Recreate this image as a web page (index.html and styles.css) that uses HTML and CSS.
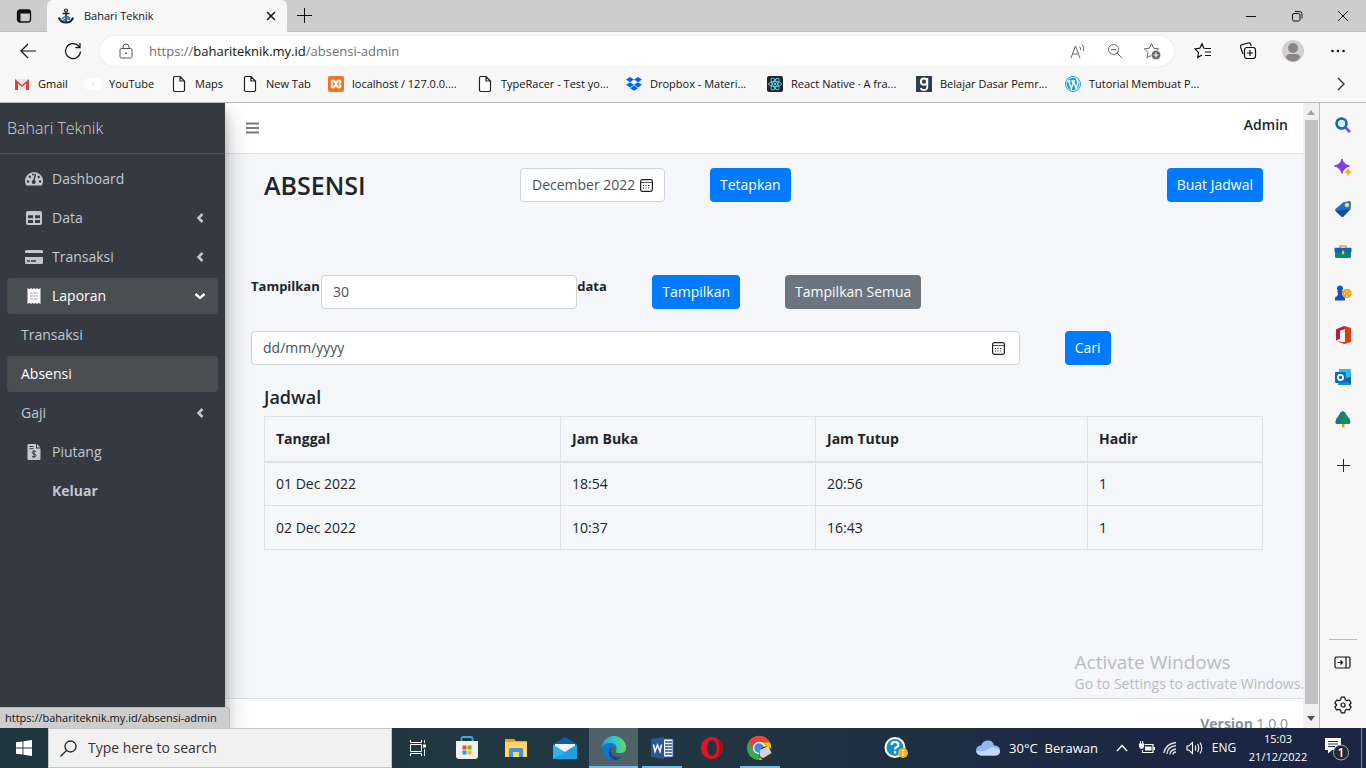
FILE: index.html
```html
<!DOCTYPE html>
<html lang="id">
<head>
<meta charset="utf-8">
<title>Bahari Teknik</title>
<link rel="stylesheet" href="styles.css">
</head>
<body>
<svg class="defs" width="0" height="0" aria-hidden="true">
  <symbol id="i-page" viewBox="0 0 16 16"><path d="M2.500 2A1.500 1.500 0 0 1 4 .5h5L13.500 5v9a1.500 1.500 0 0 1-1.500 1.500H4A1.500 1.500 0 0 1 2.500 14zM9 .5V5h4.500" fill="#fff" stroke="#222" stroke-width="1.200"/></symbol>
  <symbol id="i-left" viewBox="0 0 10 10"><path d="M7.500 1 3.500 5l4 4" fill="none" stroke="currentColor" stroke-width="2.500"/></symbol>
  <symbol id="i-cal" viewBox="0 0 13 13"><rect x=".6" y=".6" width="11.800" height="11.800" rx="1.800" fill="none" stroke="#222" stroke-width="1.200"/><path d="M1 3.500h11" stroke="#555" stroke-width="1"/><path d="M5.500 6.500h1M8 6.500h1.500M3 9h1M5.500 9h1M3 6.500h1M8 9h.8" stroke="#222" stroke-width="1.200"/></symbol>
</svg>

<header class="tabs">
  <button class="tab-actions" aria-label="Tab actions"><svg width="16" height="16" viewBox="0 0 16 16"><rect x="1.500" y="2" width="13" height="12" rx="2.500" fill="#cdcdcd" stroke="#111" stroke-width="1.300"/><path d="M1.500 5.500V4.500q0-2.500 2.500-2.500h8q2.500 0 2.500 2.500v1z" fill="#111"/><path d="M1.500 5h3v9q-3 0-3-2.500z" fill="#111"/></svg></button>
  <div class="tab">
    <svg width="16" height="16" viewBox="0 0 16 16"><circle cx="8" cy="2.500" r="1.500" fill="none" stroke="#222" stroke-width="1.200"/><path d="M8 4v10M4.500 5.500h7" stroke="#222" stroke-width="1.600"/><path d="M1 9.500C2 13 5 14.500 8 14.500s6-1.500 7-5" fill="none" stroke="#1b2b3c" stroke-width="2.200"/><path d="M4 11q4-5 8-.5M5 13q3-4 7-1" fill="none" stroke="#2f75b5" stroke-width="1.500"/></svg>
    <span>Bahari Teknik</span>
    <button class="tab-close" aria-label="Close tab"><svg width="10" height="10" viewBox="0 0 10 10"><path d="m1 1 8 8M9 1 1 9" stroke="#111" stroke-width="1.500"/></svg></button>
  </div>
  <button class="new-tab" aria-label="New tab"><svg width="15" height="15" viewBox="0 0 15 15"><path d="M7.500 0v15M0 7.500h15" stroke="#111"/></svg></button>
  <div class="win-controls">
    <button aria-label="Minimize"><svg width="12" height="12" viewBox="0 0 12 12"><path d="M1 6.500h10" stroke="#111"/></svg></button>
    <button aria-label="Restore"><svg width="12" height="12" viewBox="0 0 12 12"><rect x="1.500" y="3.500" width="7.500" height="7.500" rx="1.500" fill="none" stroke="#111"/><path d="M4 1.500h4.500q2.500 0 2.500 2.500v4.500" fill="none" stroke="#111"/></svg></button>
    <button aria-label="Close"><svg width="12" height="12" viewBox="0 0 12 12"><path d="m1 1 10 10M11 1 1 11" stroke="#111"/></svg></button>
  </div>
</header>

<div class="toolbar">
  <button aria-label="Back"><svg width="18" height="16" viewBox="0 0 18 16"><path d="M9 1 2 8l7 7M2 8h15" fill="none" stroke="#111" stroke-width="1.200"/></svg></button>
  <button aria-label="Refresh"><svg width="18" height="18" viewBox="0 0 18 18"><path d="M16.500 9.500A7.500 7.500 0 1 1 14 3.500L16 5.500M16 1v4.700h-4.700" fill="none" stroke="#111" stroke-width="1.200"/></svg></button>
  <div class="address">
    <svg class="lock" width="14" height="16" viewBox="0 0 14 16"><rect x="1" y="5.500" width="12" height="9.500" rx="1.500" fill="none" stroke="#555"/><path d="M4 5.500V4a3 3 0 0 1 6 0v1.500" fill="none" stroke="#555"/><circle cx="7" cy="10.300" r="1" fill="#555"/></svg>
    <p class="url">https://<b>bahariteknik.my.id</b>/absensi-admin</p>
    <button aria-label="Read aloud"><svg width="16" height="16" viewBox="0 0 16 16"><path d="M1 15 5.500 3 10 15M2.600 11h5.800M9.500 3.500q1.500 1.500 1 3.500M12 1.500q3 3 1.500 6.500" fill="none" stroke="#666"/></svg></button>
    <button aria-label="Zoom"><svg width="16" height="16" viewBox="0 0 16 16"><circle cx="6.500" cy="6.500" r="5" fill="none" stroke="#666"/><path d="M4 6.500h5M10 10l5 5" stroke="#666"/></svg></button>
    <button aria-label="Add to favorites"><svg width="18" height="18" viewBox="0 0 18 18"><path d="m8.500 1.500 2.200 4.700 5 .7-3.700 3.600.9 5.200-4.400-2.400-4.500 2.400.9-5.200-3.600-3.600 5-.7z" fill="none" stroke="#666"/><circle cx="13" cy="13" r="4.700" fill="#666" stroke="#fff" stroke-width=".6"/><path d="M13 10.500v5M10.500 13h5" stroke="#fff" stroke-width="1.200"/></svg></button>
  </div>
  <button aria-label="Favorites"><svg width="18" height="18" viewBox="0 0 18 18"><path d="M10 6.500 8 1.800 5.800 6.200 1 7l3.500 3.500-.8 5L8 13M10.500 6.500H17M11 10h6M11 13.500h6" fill="none" stroke="#111" stroke-width="1.200"/></svg></button>
  <button aria-label="Collections"><svg width="18" height="18" viewBox="0 0 18 18"><path d="M4 12 1.700 5.500Q1 3.200 3.400 2.600L9 1q2-.6 2.700 1.300l.5 1.700" fill="none" stroke="#111" stroke-width="1.200"/><rect x="5.500" y="5.500" width="11" height="11" rx="2.500" fill="#f7f7f7" stroke="#111" stroke-width="1.200"/><path d="M11 8v6M8 11h6" stroke="#111" stroke-width="1.200"/></svg></button>
  <button class="profile" aria-label="Profile"><svg width="22" height="22" viewBox="0 0 22 22"><circle cx="11" cy="11" r="11" fill="#d2d0ce"/><circle cx="11" cy="8" r="5" fill="#8a8684"/><path d="M3.500 17Q5 14 8 14h6q3 0 4.500 3-3 4.500-7.500 4.500T3.500 17" fill="#8a8684"/></svg></button>
  <button aria-label="Settings and more"><svg width="16" height="4" viewBox="0 0 16 4"><circle cx="2.500" cy="2" r="1.300" fill="#111"/><circle cx="8" cy="2" r="1.300" fill="#111"/><circle cx="13.500" cy="2" r="1.300" fill="#111"/></svg></button>
</div>

<nav class="bookmarks" aria-label="Favorites bar">
  <a href="#" class="bm-a"><svg width="16" height="16" viewBox="0 0 16 16"><path d="M1 3h14v11H1z" fill="#e8e8e8"/><path d="M1 14V3l7 6 7-6v11h-3V7.500L8 11 4 7.500V14z" fill="#d5453a"/></svg><span>Gmail</span></a>
  <a href="#" class="bm-b"><svg width="16" height="16" viewBox="0 0 16 16"><rect x="0" y="2.500" width="16" height="11" rx="2.500" fill="#fff"/><path d="m6.500 5.500 4 2.500-4 2.500z" fill="#eee"/></svg><span>YouTube</span></a>
  <a href="#" class="bm-a"><svg width="16" height="16"><use href="#i-page"/></svg><span>Maps</span></a>
  <a href="#" class="bm-b"><svg width="16" height="16"><use href="#i-page"/></svg><span>New Tab</span></a>
  <a href="#" class="bm-c"><svg width="16" height="16" viewBox="0 0 16 16"><rect width="16" height="16" rx="2" fill="#ee7623"/><path d="M5 3.500q2 0 3 2 1-2 3-2 2.500 0 2.500 2.300T11.500 8q2 .2 2 2.300T11 12.500q-2 0-3-2-1 2-3 2-2.500 0-2.500-2.200T4.500 8q-2-.2-2-2.200T5 3.500z" fill="#fff"/><path d="M5 5.700v1l1.500 1.300L5 9.300v1M11 5.700v1L9.500 8 11 9.300v1" stroke="#ee7623" stroke-width="1.200" fill="none"/></svg><span>localhost / 127.0.0....</span></a>
  <a href="#" class="bm-c"><svg width="16" height="16"><use href="#i-page"/></svg><span>TypeRacer - Test yo...</span></a>
  <a href="#" class="bm-d"><svg width="16" height="16" viewBox="0 0 16 16"><path d="m4 1 4 2.600-4 2.600-4-2.600zm8 0 4 2.600-4 2.600-4-2.600zM4 6.200l4 2.600-4 2.600-4-2.600zm8 0 4 2.600-4 2.600-4-2.600zM4 12.200l4-2.600 4 2.600-4 2.600z" fill="#0061ff"/></svg><span>Dropbox - Materi...</span></a>
  <a href="#" class="bm-c"><svg width="16" height="16" viewBox="0 0 16 16"><rect width="16" height="16" rx="2" fill="#20232a"/><g fill="none" stroke="#61dafb" stroke-width=".9"><ellipse cx="8" cy="8" rx="6.500" ry="2.500"/><ellipse cx="8" cy="8" rx="6.500" ry="2.500" transform="rotate(60 8 8)"/><ellipse cx="8" cy="8" rx="6.500" ry="2.500" transform="rotate(120 8 8)"/></g><circle cx="8" cy="8" r="1.200" fill="#61dafb"/></svg><span>React Native · A fra...</span></a>
  <a href="#" class="bm-c"><svg width="16" height="16" viewBox="0 0 16 16"><path d="M0 0h16v16H0z" fill="#2d3e50"/><circle cx="8" cy="5.700" r="3.100" fill="none" stroke="#fff" stroke-width="2"/><path d="M11.300 2v8.500q0 3.500-3.300 3.500-2.500 0-3.500-1.800" fill="none" stroke="#fff" stroke-width="1.800"/></svg><span>Belajar Dasar Pemr...</span></a>
  <a href="#" class="bm-c"><svg width="16" height="16" viewBox="0 0 16 16"><circle cx="8" cy="8" r="7.500" fill="#fff" stroke="#1ba0d7"/><circle cx="8" cy="8" r="6.300" fill="#1ba0d7"/><path d="M2 5h3.500M6.500 5H10M3.700 5l2.600 7.500L8 7.500 7.200 5M8.500 5 11 12.500 13 6.500Q12 4.500 11.500 3" fill="none" stroke="#fff" stroke-width="1.400"/></svg><span>Tutorial Membuat P...</span></a>
  <button aria-label="More favorites"><svg width="8" height="14" viewBox="0 0 8 14"><path d="m1 1 6 6-6 6" fill="none" stroke="#333" stroke-width="1.400"/></svg></button>
</nav>

<div class="workspace">
  <div class="viewport">
    <aside class="sidebar">
      <a class="brand" href="#">Bahari Teknik</a>
      <nav class="menu">
        <a href="#"><svg class="ico" width="20" height="16" viewBox="0 0 20 16"><path d="M1 10a9 9 0 0 1 18 0q0 2.500-1.200 4.500H2.200Q1 12.500 1 10z" fill="currentColor"/><path d="m9.800 10 1.700-7" stroke="#343a40" stroke-width="1.400"/><g fill="#343a40"><circle cx="9.700" cy="11" r="2"/><circle cx="4" cy="10.500" r="1.200"/><circle cx="5.800" cy="5.800" r="1.200"/><circle cx="16" cy="10.500" r="1.200"/><circle cx="14.700" cy="6" r="1.200"/><circle cx="9" cy="3.500" r="1"/></g></svg><span>Dashboard</span></a>
        <a href="#"><svg class="ico" width="20" height="16" viewBox="0 0 20 16"><rect x="2" y="1" width="16" height="14" rx="1.800" fill="currentColor"/><path d="M4 5.200h5v3H4zm7 0h5v3h-5zM4 10h5v3H4zm7 0h5v3h-5z" fill="#343a40"/></svg><span>Data</span><svg class="arrow" width="10" height="10"><use href="#i-left"/></svg></a>
        <a href="#"><svg class="ico" width="20" height="16" viewBox="0 0 20 16"><path d="M1 4V2.500Q1 1 2.500 1h15Q19 1 19 2.500V4zm0 4h18v5.500q0 1.500-1.500 1.500h-15Q1 15 1 13.500z" fill="currentColor"/><path d="M3 12h3M7 12h5" stroke="#343a40" stroke-width="1.700"/></svg><span>Transaksi</span><svg class="arrow" width="10" height="10"><use href="#i-left"/></svg></a>
        <a href="#" class="active"><svg class="ico" width="20" height="18" viewBox="0 0 20 18"><path d="m3.500 1 2 1.300 1.500-1.300L8.500 2.300 10 1l1.500 1.300L13 1l1.500 1.300 2-1.300v16l-2-1.300L13 17l-1.500-1.300L10 17l-1.500-1.300L7 17l-1.500-1.300-2 1.300z" fill="#fff"/><path d="M6 6h8M6 9h8M6 12h8" stroke="#ccc" stroke-width="1.300"/></svg><span>Laporan</span><svg class="arrow" width="10" height="10" viewBox="0 0 10 10"><path d="m.5 3 4.500 4 4.500-4" fill="none" stroke="#fff" stroke-width="2.400"/></svg></a>
        <a href="#" class="sub"><span>Transaksi</span></a>
        <a href="#" class="sub active"><span>Absensi</span></a>
        <a href="#" class="sub"><span>Gaji</span><svg class="arrow" width="10" height="10"><use href="#i-left"/></svg></a>
        <a href="#"><svg class="ico" width="20" height="18" viewBox="0 0 20 18"><path d="M4.500 1H12v4.500h4.500V16q0 1-1 1h-11q-1 0-1-1V2q0-1 1-1zM13 1l3.500 3.500H13z" fill="currentColor"/><path d="M5.500 3.500h4M5.500 5.700h4M12 8.800q-1-.8-2-.7-1.700.1-1.700 1.400T10 11q2 .2 2 1.500T10 14q-1 0-2-.7M10 7v8" stroke="#343a40" fill="none"/></svg><span>Piutang</span></a>
        <a href="#" class="logout"><span>Keluar</span></a>
      </nav>
    </aside>

    <main class="main">
      <header class="topbar">
        <button aria-label="Toggle menu"><svg width="13" height="12" viewBox="0 0 13 12"><path d="M0 1.500h13M0 6h13M0 10.500h13" stroke="#7b7b7b" stroke-width="1.800"/></svg></button>
        <a href="#">Admin</a>
      </header>
      <section class="content">
        <div class="title-row">
          <h1>ABSENSI</h1>
          <div class="field month"><input type="text" value="December 2022" aria-label="Bulan"><button aria-label="Pilih bulan"><svg width="13" height="13"><use href="#i-cal"/></svg></button></div>
          <div><button class="btn">Tetapkan</button></div>
          <button class="btn">Buat Jadwal</button>
        </div>
        <form class="limit-row">
          <label for="limit">Tampilkan</label>
          <div class="field"><input id="limit" type="text" value="30"></div>
          <label class="after" for="limit">data</label>
          <button type="button" class="btn">Tampilkan</button>
          <button type="button" class="btn grey">Tampilkan Semua</button>
        </form>
        <form class="search-row">
          <div class="field date"><input type="text" placeholder="dd/mm/yyyy" aria-label="Tanggal"><button type="button" aria-label="Pilih tanggal"><svg width="13" height="13"><use href="#i-cal"/></svg></button></div>
          <button type="button" class="btn">Cari</button>
        </form>
        <div class="schedule">
          <h2>Jadwal</h2>
          <table>
            <colgroup><col class="c1"><col class="c2"><col class="c3"><col></colgroup>
            <thead><tr><th>Tanggal</th><th>Jam Buka</th><th>Jam Tutup</th><th>Hadir</th></tr></thead>
            <tbody>
              <tr><td>01 Dec 2022</td><td>18:54</td><td>20:56</td><td>1</td></tr>
              <tr><td>02 Dec 2022</td><td>10:37</td><td>16:43</td><td>1</td></tr>
            </tbody>
          </table>
        </div>
      </section>
      <footer class="footer"><b>Version</b> 1.0.0</footer>
    </main>

    <div class="scrollbar" aria-hidden="true">
      <svg width="8" height="5" viewBox="0 0 8 5"><path d="m4 0 4 5H0z" fill="#a3a3a3"/></svg>
      <div class="thumb"></div>
      <svg width="8" height="5" viewBox="0 0 8 5"><path d="m4 5 4-5H0z" fill="#505050"/></svg>
    </div>
    <div class="status">https://bahariteknik.my.id/absensi-admin</div>
  </div>

  <aside class="rail">
    <button aria-label="Search"><svg width="18" height="18" viewBox="0 0 18 18"><path d="m11 11 5 5" stroke="#8a4be8" stroke-width="3"/><circle cx="7.500" cy="7.500" r="5" fill="#d8efff" stroke="#1b5fd0" stroke-width="2.600"/></svg></button>
    <button aria-label="Discover"><svg width="18" height="18" viewBox="0 0 18 18"><path d="M8 1q1.500 5.500 7.500 7Q9.500 9.500 8 15.500 6.500 9.500.5 8 6.500 6.500 8 1z" fill="#7b3fe4" stroke="#7b3fe4"/><path d="M14 10.500q.7 2.800 3.500 3.500-2.800.7-3.500 3.500-.7-2.800-3.500-3.500 2.800-.7 3.500-3.500z" fill="#f5b318" stroke="#f5b318" stroke-width=".6"/></svg></button>
    <button aria-label="Shopping"><svg width="18" height="18" viewBox="0 0 18 18"><path d="M9 2.500 15 1q2 0 2 2l-.5 6-7 7.500q-1 .8-2 0L1.500 11q-1-1 0-2z" fill="#1a6fc9"/><path d="m1.500 11 6 5.500q1 .8 2 0L16.500 9z" fill="#0d4da5"/><circle cx="13" cy="5" r="2" fill="#ffe9a0" stroke="#e8b730"/></svg></button>
    <button aria-label="Tools"><svg width="18" height="18" viewBox="0 0 18 18"><path d="M6 6V4h6v2" fill="none" stroke="#e5ad2c" stroke-width="1.600"/><path d="M1 9h16v5.500q0 1.500-1.500 1.500h-13Q1 16 1 14.500z" fill="#0e8577"/><rect x=".5" y="5.800" width="17" height="4.500" rx="1" fill="#155fc4"/><rect x="8" y="8.500" width="2.200" height="4" rx="1" fill="#f4bf35"/></svg></button>
    <button aria-label="Games"><svg width="18" height="18" viewBox="0 0 18 18"><circle cx="6" cy="4.500" r="3" fill="#1c56c0"/><path d="M3 7h6l-1 2q0 3 3 4.500V16.500H1v-3Q4 12 4 9z" fill="#1c4db8"/><circle cx="13" cy="9.500" r="4.700" fill="#e8a321"/><path d="M13 6.500v1.200M13 11.300v1.200M10 9.500h1.200M14.800 9.500H16" stroke="#fff" stroke-width="1.300"/></svg></button>
    <button aria-label="Office"><svg width="18" height="20" viewBox="0 0 18 20"><path d="M2 4.500 10.500 1 17 3v14l-6.500 2L3 16.500l8 .5V4L6 5.500v8L2 15.500z" fill="#dc3b10"/><path d="M2 4.500 10.500 1v3L6 5.500v8L2 15.500z" fill="#b91f35"/></svg></button>
    <button aria-label="Outlook"><svg width="18" height="18" viewBox="0 0 18 18"><path d="M5 1h12v16H5z" fill="#35b6f2"/><path d="M5 9h12v8H4z" fill="#1490df"/><path d="m10 12 7-3v7z" fill="#0a5da8"/><rect x="1" y="4" width="11" height="11" rx="1" fill="#0f6cbd"/><circle cx="6.500" cy="9.500" r="2.600" fill="none" stroke="#fff" stroke-width="1.600"/></svg></button>
    <button aria-label="Tree"><svg width="18" height="18" viewBox="0 0 18 18"><path d="M8 13h2.500v4.500H8z" fill="#e8a020"/><path d="M9 1q3 1 4 4.500 3 3 3.500 6.500.3 2-2 2h-11q-2.300 0-2-2Q2 8.500 5 5.500 6 2 9 1z" fill="#168a68"/><path d="M9 1Q6 2 5 5.500q-3 3-3.500 6.500-.3 2 2 2H7Z" fill="#157a7a"/></svg></button>
    <button class="add" aria-label="Add"><svg width="13" height="13" viewBox="0 0 13 13"><path d="M6.500 0v13M0 6.500h13" stroke="#222"/></svg></button>
    <div class="rail-end">
      <button aria-label="Hide sidebar"><svg width="18" height="14" viewBox="0 0 18 14"><rect x="1" y="1" width="15" height="11" rx="1.500" fill="none" stroke="#111" stroke-width="1.200"/><path d="M12 1v11M3.500 6.500h5M6.500 4.500l2 2-2 2" fill="none" stroke="#111" stroke-width="1.200"/></svg></button>
      <button aria-label="Settings"><svg width="18" height="18" viewBox="0 0 18 18"><path d="M7.300 1.200h3.400l.6 2.500 1.600 1 2.500-.7 1.700 3L15.300 9l1.800 2-1.700 3-2.500-.7-1.600 1-.6 2.500H7.300l-.6-2.500-1.600-1-2.500.7-1.700-3L2.700 9 .9 7l1.700-3 2.500.7 1.600-1z" fill="none" stroke="#111" stroke-width="1.200" stroke-linejoin="round"/><circle cx="9" cy="9" r="2" fill="none" stroke="#111" stroke-width="1.200"/></svg></button>
    </div>
  </aside>
</div>

<footer class="taskbar">
  <button class="start" aria-label="Start"><svg width="16" height="16" viewBox="0 0 16 16"><path d="M0 2.300 6.500 1.400v6.100H0zM7.400 1.300 16 0v7.500H7.400zM0 8.400h6.500v6.200L0 13.700zM7.400 8.400H16V16l-8.600-1.200z" fill="#fff"/></svg></button>
  <label class="search"><svg width="17" height="17" viewBox="0 0 17 17"><circle cx="10.500" cy="6.500" r="5.500" fill="none" stroke="#222" stroke-width="1.300"/><path d="m6.500 10.500-6 6" stroke="#222" stroke-width="1.300"/></svg><input type="text" placeholder="Type here to search" aria-label="Type here to search"></label>
  <div class="apps">
    <button aria-label="Task view"><svg width="18" height="16" viewBox="0 0 18 16"><path d="M1.500 0v2.500h11V0M1.500 16v-2.500h11V16M1.500 4.500h11v7h-11zM15.500 0v3M15.500 9v7" fill="none" stroke="#fff"/><path d="M14 4.500h3v3h-3z" fill="#fff"/></svg></button>
    <button aria-label="Store"><svg width="24" height="24" viewBox="0 0 24 24"><path d="M6.500 5V2.500Q6.500 1 8 1h8q1.500 0 1.500 1.500V5" fill="none" stroke="#35aee8" stroke-width="1.800"/><path d="M1 5h22v15q0 3-3 3H4q-3 0-3-3z" fill="#f0f0f0"/><path d="M7.500 9.500h4v4h-4z" fill="#f25022"/><path d="M12.500 9.500h4v4h-4z" fill="#7fba00"/><path d="M7.500 14.500h4v4h-4z" fill="#00a4ef"/><path d="M12.500 14.500h4v4h-4z" fill="#ffb900"/></svg></button>
    <button aria-label="File Explorer"><svg width="24" height="22" viewBox="0 0 24 22"><path d="M1 2h9l2 2h11v16H1z" fill="#e8a317"/><path d="M1 5h22v15H1z" fill="#ffd667"/><path d="M5 20v-7q0-2 2-2h10q2 0 2 2v7h-4v-5H9v5z" fill="#4390d8"/></svg></button>
    <button aria-label="Mail"><svg width="24" height="24" viewBox="0 0 24 24"><path d="M0 8 12 1l12 7v4H0z" fill="#0f5ea8"/><path d="M2 8h20v9H2z" fill="#f4f4f4"/><path d="M0 8.500 12 16l12-7.500V23H0z" fill="#2eb5ef"/><path d="M12 16 24 8.500V23H0z" fill="#1592dd" opacity=".6"/></svg></button>
    <button class="current" aria-label="Edge"><svg width="26" height="26" viewBox="0 0 26 26"><defs><linearGradient id="eg"><stop offset="0" stop-color="#259fdc"/><stop offset=".55" stop-color="#30c9cb"/><stop offset="1" stop-color="#64dc55"/></linearGradient></defs><path d="M1 13A12 12 0 0 1 25 13q0 4.500-5 5h-3.500q-2-.5-1-3Q16 11 11 10 4 9 1 13z" fill="url(#eg)"/><path d="M1 13q2.500-5 8-5 6 0 7 5-3-2.500-5.500-.5-3 3 0 7.500 4 5 10.500 1.500-3.500 4-8.500 3.500Q3 24.500 1 13z" fill="#1675ca"/><path d="M10.500 12.500q-4.500 2.500-2 8.500 2 3.500 5.500 4 4 .2 7-3.500-6 2.500-9.500-1.500-3-4.500-1-7.500z" fill="#114a97"/></svg></button>
    <button class="running word" aria-label="Word"><svg width="24" height="24" viewBox="0 0 24 24"><path d="M12 3h11v18H12z" fill="#fff" stroke="#2b579a"/><path d="M15 6h7M15 9h7M15 12h7M15 15h7M15 18h7" stroke="#2b579a" stroke-width="1.300"/><path d="m1 3 13-2v22L1 21z" fill="#2b579a"/><path d="m3.500 8.500 1.500 7L7.500 9l2.500 6.500 1.500-7" fill="none" stroke="#fff" stroke-width="1.500"/></svg></button>
    <button aria-label="Opera"><svg width="24" height="24" viewBox="0 0 24 24"><ellipse cx="12" cy="12" rx="11" ry="11" fill="#e81123"/><path d="M16 2q7 3 7 10t-7 10q3-3 3-10T16 2z" fill="#a7101d"/><ellipse cx="12" cy="12" rx="4.800" ry="8" fill="#213642"/></svg></button>
    <button class="running" aria-label="Chrome"><svg width="28" height="26" viewBox="0 0 28 26"><circle cx="13" cy="13" r="12" fill="#34a853"/><path d="M2.600 7A12 12 0 0 1 24 7.500H13L8 16z" fill="#ea4335"/><path d="M24 7.500A12 12 0 0 1 13 25l5-10-5-7.500z" fill="#fbbc05"/><circle cx="13" cy="13" r="5.500" fill="#4285f4" stroke="#fff" stroke-width="1.300"/><circle cx="20" cy="18.500" r="7" fill="#34302e"/><path d="m13.500 15 9-4 3 7-8 5q-4-1-4-4z" fill="#cfd3d5"/></svg></button>
  </div>
  <button class="help" aria-label="Help"><svg width="24" height="24" viewBox="0 0 24 24"><circle cx="11" cy="11.500" r="9.500" fill="#1190d0" stroke="#fff" stroke-width="2"/><path d="M7.500 9q0-3 3.500-3t3.500 2.800q0 1.700-2 2.500-1.500.7-1.500 2.200M11 15v2.500" fill="none" stroke="#fff" stroke-width="2.200"/><circle cx="19" cy="17" r="5" fill="#f6b21b"/><path d="M19 14v1.200M19 16.500v3.500" stroke="#fff" stroke-width="1.400"/></svg></button>
  <div class="tray">
    <button class="weather"><svg width="26" height="18" viewBox="0 0 26 18"><path d="M6 16.500a5 5 0 0 1 0-10Q8 1.500 13 1.500t6 5q6 0 6 5t-5 5z" fill="#91b4f2"/><path d="M6 16.500Q2 16 1.500 12q8 1 12-2 6-4 11.500 1.500 0 5-5 5z" fill="#c5d8fb"/></svg><span>30°C&nbsp; Berawan</span></button>
    <button aria-label="Hidden icons"><svg width="12" height="8" viewBox="0 0 12 8"><path d="m1 7 5-5.500L11 7" fill="none" stroke="#fff" stroke-width="1.300"/></svg></button>
    <button aria-label="Battery"><svg width="17" height="14" viewBox="0 0 17 14"><path d="M6.500 3.500H15v8H4.500V9" fill="none" stroke="#fff" stroke-width="1.200"/><path d="M7 5.500h6.500v4H7zM15.500 6H17v3h-1.500zM1 2.500h5V6q-1 2-2.500 2T1 6zM2 0h1v3H2zM4.200 0h1v3h-1z" fill="#fff"/></svg></button>
    <button aria-label="Network"><svg width="14" height="14" viewBox="0 0 14 14"><path d="M1 12Q2 3 13 1.500M4 13q0-7 9-8.500M7 13.500Q7 9 13 8M10 13.500Q10 11 13 11" fill="none" stroke="#ddd" stroke-width="1.300"/></svg></button>
    <button aria-label="Volume"><svg width="17" height="14" viewBox="0 0 17 14"><path d="M1 5h2l3.500-3.500v11L3 9H1zM9 4.500q1.500 2.500 0 5M11.500 3q2.500 4 0 8M14 1.500q3.500 5.500 0 11" fill="none" stroke="#fff" stroke-width="1.100"/></svg></button>
    <button class="lang">ENG</button>
    <button class="clock"><span>15:03</span><span>21/12/2022</span></button>
    <button class="notes" aria-label="Notifications"><svg width="26" height="26" viewBox="0 0 26 26"><path d="M1 3h16v12H8l-4 3.500V15H1z" fill="#fff"/><path d="M4 6.500h10M4 9h10M4 11.500h7" stroke="#22344a"/><circle cx="17" cy="17.500" r="7.500" fill="#24292f" stroke="#aaa"/></svg><span class="count">1</span></button>
  </div>
</footer>

<div class="watermark"><p class="big">Activate Windows</p><p>Go to Settings to activate Windows.</p></div>
</body>
</html>
```
FILE: styles.css
```css
* { box-sizing: border-box; }
body {
  margin: 0; height: 100vh; overflow: hidden; position: relative;
  display: flex; flex-direction: column;
  font: 12px/16px "Open Sans", "Noto Sans", sans-serif; color: #111;
}
button, input { font: inherit; color: inherit; border: 0; background: none; padding: 0; margin: 0; }
button { display: flex; align-items: center; justify-content: center; flex: none; }
a { color: inherit; text-decoration: none; }
p, h1, h2 { margin: 0; }
svg { flex: none; }
.defs { position: absolute; }

/* browser chrome */
.tabs { flex: none; height: 32px; display: flex; background: #cdcdcd; border-bottom: 1px solid #bdbdbd; }
.tab-actions { width: 47px; }
.tab { width: 240px; height: 32px; display: flex; align-items: center; gap: 10px; padding: 0 10px 0 11px; background: #f7f7f7; border-radius: 6px 6px 0 0; font-size: 11px; }
.tab-close { width: 12px; margin-left: auto; }
.new-tab { width: 34px; }
.win-controls { display: flex; margin-left: auto; }
.win-controls button { width: 46px; }
.toolbar { flex: none; height: 38px; display: flex; align-items: center; background: #f7f7f7; padding: 0 6px 0 5px; }
.toolbar > button { width: 45px; height: 32px; }
.address { flex: 1; height: 30px; display: flex; align-items: center; background: #fff; border-radius: 15px; margin: 0 6px 0 5px; padding: 0 4px 0 19px; box-shadow: 0 0 3px #e4e4e4; }
.address button { width: 37px; }
.url { flex: 1; margin-left: 16px; font-size: 13px; line-height: 20px; color: #707070; }
.url b { font-weight: 400; color: #111; }
.bookmarks { flex: none; height: 33px; display: flex; align-items: center; padding: 0 21px 4px 14px; background: #f7f7f7; border-bottom: 1px solid #bababa; font-size: 11px; }
.bookmarks a { display: flex; align-items: center; gap: 8px; white-space: nowrap; flex: none; }
.bm-a { width: 71px; }
.bm-b { width: 86px; }
.bm-c { width: 149px; }
.bm-d { width: 141px; }
.bookmarks button { margin-left: auto; }
.workspace { flex: 1; min-height: 0; display: flex; }
.viewport { flex: 1; min-width: 0; display: flex; position: relative; background: #f4f6f9; overflow: hidden; }
.scrollbar { width: 16px; flex: none; display: flex; flex-direction: column; align-items: center; background: #f1f1f1; padding: 7px 0; gap: 5px; }
.thumb { flex: 1; width: 13px; background: #c1c1c1; margin-bottom: 7px; }
.status { position: absolute; left: 0; bottom: 0; z-index: 3; height: 21px; padding: 2px 12px 0 5px; font-size: 11px; background: #cdcdcd; border: 1px solid #bbb; border-width: 1px 1px 0 0; border-radius: 0 3px 0 0; }
.rail { width: 47px; flex: none; background: #f7f7f7; border-left: 1px solid #bababa; display: flex; flex-direction: column; align-items: center; padding-top: 1px; }
.rail button { width: 42px; height: 42px; }
.rail .add { height: 50px; }
.rail-end { margin-top: auto; border-top: 1px solid #bababa; width: 28px; display: flex; flex-direction: column; align-items: center; padding: 2px 0; }

/* application */
.sidebar { width: 225px; flex: none; z-index: 2; background: #343a40; color: #c2c7d0; box-shadow: 0 12px 26px rgba(0,0,0,.25), 0 8px 9px rgba(0,0,0,.22); font-size: 14px; line-height: 20px; }
.brand { display: flex; align-items: center; height: 51px; padding-left: 7px; border-bottom: 1px solid #4b545c; font-size: 16px; font-weight: 300; color: #d3d5d8; }
.menu { display: flex; flex-direction: column; gap: 3px; padding: 7px; }
.menu a { height: 36px; display: flex; align-items: center; padding: 0 13px 0 17px; border-radius: 4px; }
.ico { margin-right: 8px; }
.menu .arrow { margin-left: auto; }
.menu .sub { padding-left: 14px; }
.menu .active { background: #494e51; color: #fff; }
.menu .logout { padding-left: 45px; font-weight: 700; }
.main { flex: 1; min-width: 0; display: flex; flex-direction: column; font-size: 14px; line-height: 20px; color: #212529; }
.topbar { flex: none; height: 51px; display: flex; align-items: center; justify-content: space-between; padding: 0 15px 6px 21px; background: #fff; border-bottom: 1px solid #dee2e6; font-weight: 600; }
.topbar button { padding-top: 6px; }
.content { flex: 1; padding: 14px 27px 0 26px; }
.title-row { display: grid; grid-template-columns: 256px 190px 1fr auto; padding: 0 13px; align-items: center; margin-bottom: 73px; }
h1 { font-size: 25px; line-height: 34px; font-weight: 600; }
.field { height: 34px; display: flex; align-items: center; background: #fff; border: 1px solid #ced4da; border-radius: 4px; padding: 0 11px; color: #495057; }
.field input { flex: 1; min-width: 0; outline: 0; }
.field input::placeholder { color: #495057; opacity: 1; }
.month { width: 145px; }
.btn { height: 34px; padding: 0 10px; border-radius: 4px; background: #007bff; color: #fff; white-space: nowrap; }
.grey { background: #6c757d; }
.limit-row { display: flex; margin-bottom: 22px; }
.limit-row .field { width: 25%; }
.limit-row label { min-width: 70px; padding-top: 1px; font-size: 13px; font-weight: 700; }
.limit-row .after { width: 75px; }
.limit-row .btn { margin-right: 45px; }
.search-row { display: flex; gap: 45px; margin-bottom: 22px; }
.date { width: 75%; padding-right: 14px; }
.schedule { padding: 0 13px; }
h2 { font-size: 18px; line-height: 20px; font-weight: 600; margin-bottom: 9px; }
table { width: 100%; table-layout: fixed; border-collapse: collapse; }
th, td { height: 44px; padding: 1px 11px 0; text-align: left; border: 1px solid #dee2e6; }
thead th { height: 45px; border-bottom-width: 2px; font-weight: 700; }
.c1 { width: 296px; }
.c2 { width: 255px; }
.c3 { width: 272px; }
.footer { flex: none; height: 30px; overflow: hidden; background: #fff; border-top: 1px solid #dee2e6; padding: 15px 15px 0; text-align: right; color: #869099; }

/* taskbar */
.taskbar { flex: none; height: 40px; display: flex; background: linear-gradient(90deg, #1f373e, #213642 50%, #1b2742 85%); color: #fff; }
.start { width: 48px; }
.search { width: 344px; display: flex; align-items: center; gap: 11px; padding-left: 11px; background: #f1f1f1; border: 1px solid #c4c4c4; color: #333; font-size: 14px; }
.search input { flex: 1; outline: 0; line-height: 20px; }
.search input::placeholder { color: #333; opacity: 1; }
.apps { display: flex; padding-left: 1px; }
.apps button { width: 49px; border: solid transparent; border-width: 2px 0; }
.apps .current { background: #4f626a; border-bottom-color: #76b9ed; }
.apps .running { border-bottom-color: #76b9ed; background-clip: padding-box; width: 40px; margin: 0 5px 0 4px; }
.help { width: 48px; margin-left: 87px; }
.tray { margin-left: auto; display: flex; align-items: center; padding-right: 4px; }
.tray button { width: 24px; height: 40px; }
.tray .weather { width: auto; gap: 8px; margin-right: 12px; font-size: 13px; }
.tray .lang { width: 36px; }
.tray .clock { width: 72px; flex-direction: column; line-height: 18px; font-size: 11px; }
.tray .notes { position: relative; width: 48px; border-right: 1px solid #7c8494; padding-right: 2px; }
.count { position: absolute; left: 23px; top: 17px; width: 8px; font-weight: 600; }

.watermark { position: absolute; right: 62px; bottom: 74px; z-index: 5; color: #b9bbbe; font-size: 14px; line-height: 20px; pointer-events: none; }
.watermark .big { font-size: 19px; line-height: 24px; }
```
